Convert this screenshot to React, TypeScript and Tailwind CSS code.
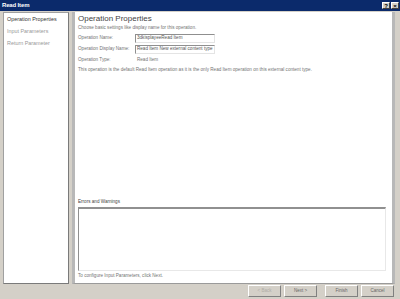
import { useState } from "react";

const navItems = ["Operation Properties", "Input Parameters", "Return Parameter"];

const Field = ({ label, value, box }: { label: string; value: string; box?: boolean }) => (
    <div className="flex items-center h-[10px]">
        <span className="w-[57px] shrink-0">{label}</span>
        {box ? (
            <div className="w-[80px] h-[9px] border border-[#8f8f8f] border-r-[#e4e4e4] border-b-[#e4e4e4] bg-white flex items-center px-[1px] overflow-hidden whitespace-nowrap text-[#555]">
                {value}
            </div>
        ) : (
            <span className="px-[2px]">{value}</span>
        )}
    </div>
);

const WizButton = ({ label, disabled }: { label: string; disabled?: boolean }) => (
    <button className={`w-[33px] h-[12px] border border-[#fff] border-r-[#808080] border-b-[#808080] bg-[#d4d0c8] text-[4.5px] leading-none ${disabled ? "text-[#b0ada6]" : "text-[#666]"}`}>
        {label}
    </button>
);

export default function App() {
    const [active] = useState(0);

    return (
        <div className="w-[400px] h-[299px] bg-[#d4d0c8] flex flex-col overflow-hidden font-['Liberation_Sans',sans-serif] text-[4.6px] text-[#747474]">
            {/* title bar */}
            <div className="h-[11px] bg-[#0b2a6b] flex items-center justify-between pl-[2px] pr-[1px]">
                <span className="text-white font-bold text-[6px] tracking-tight">Read Item</span>
                <div className="flex gap-[1px]">
                    <div className="w-[8px] h-[7px] bg-[#d4d0c8] border border-white border-r-[#404040] border-b-[#404040] flex items-center justify-center text-[6px] font-bold text-black leading-none">?</div>
                    <div className="w-[8px] h-[7px] bg-[#d4d0c8] border border-white border-r-[#404040] border-b-[#404040] flex items-center justify-center text-[6px] font-bold text-black leading-none">×</div>
                </div>
            </div>

            <div className="flex-1 flex gap-[3px] px-[3px] pt-[1px]">
                {/* left nav */}
                <div className="w-[66px] h-[272px] bg-white border border-[#a0a0a0] border-r-[#7a7a7a] border-b-[#7a7a7a] pt-[3px] pl-[3px] flex flex-col gap-[5px] text-[5.4px] leading-[7px]">
                    {navItems.map((item, i) => (
                        <span key={item} className={i === active ? "text-[#333] font-medium" : "text-[#999]"}>{item}</span>
                    ))}
                </div>

                {/* right pane */}
                <div className="w-[323px] h-[272px] bg-white border-l-[3px] border-l-[#b8b8b8] border-r-[3px] border-r-[#b8b8b8] border-b border-b-[#9a9a9a] flex flex-col pl-[3px] pr-[3px]">
                    <div className="text-[8px] text-[#444] mt-[3px] leading-none">Operation Properties</div>
                    <div className="mt-[2px]">Choose basic settings like display name for this operation.</div>
                    <div className="mt-[2px] flex flex-col gap-[1px]">
                        <Field label="Operation Name:" value="3dkisplayeeRead Item" box />
                        <Field label="Operation Display Name:" value="Read Item New external content type" box />
                        <Field label="Operation Type:" value="Read Item" />
                    </div>
                    <div className="mt-[1px]">This operation is the default Read Item operation as it is the only Read Item operation on this external content type.</div>

                    <div className="mt-auto mb-[1px] text-[#444] font-medium text-[4.6px]">Errors and Warnings</div>
                    <div className="h-[64px] mr-[3px] border border-[#909090] border-r-[#e8e8e8] border-b-[#e8e8e8] border-t-[2px]"></div>
                    <div className="mt-[2px] mb-[3px]">To configure Input Parameters, click Next.</div>
                </div>
            </div>

            {/* buttons */}
            <div className="h-[15px] flex items-center justify-end gap-[3px] pr-[6px] pb-[1px]">
                <WizButton label="< Back" disabled />
                <WizButton label="Next >" />
                <div className="w-[2px]" />
                <WizButton label="Finish" />
                <WizButton label="Cancel" />
            </div>
        </div>
    );
}
